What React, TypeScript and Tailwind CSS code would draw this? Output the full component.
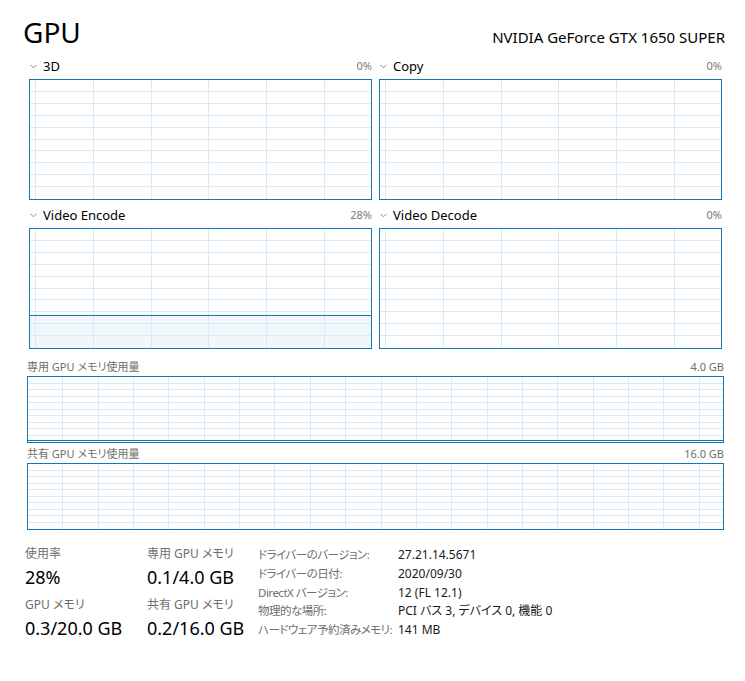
import React from "react";

const BORDER = "#1576b6";
const GRID = "#d9eaf4";

type GridProps = {
  w: number;
  h: number;
  xs: number[];
  rows: number;
  fill?: number; // fraction of height filled from bottom
};

// chart grid drawn as svg inside a bordered box
const ChartGrid = ({ w, h, xs, rows, fill }: GridProps) => {
  const inner = h - 2;
  const ys = Array.from({ length: rows - 1 }, (_, i) => Math.round(((i + 1) * inner) / rows) + 0.5);
  const fillY = fill !== undefined ? Math.round(inner * (1 - fill)) : null;
  return (
    <svg width={w} height={h} className="block" shapeRendering="crispEdges">
      <rect x={0.5} y={0.5} width={w - 1} height={h - 1} fill="#ffffff" stroke="none" />
      {fillY !== null && (
        <rect x={1} y={fillY + 1} width={w - 2} height={h - 2 - fillY} fill="#f1f6fa" />
      )}
      {xs.map((x) => (
        <line key={"x" + x} x1={Math.round(x) + 0.5} y1={1} x2={Math.round(x) + 0.5} y2={h - 1} stroke={GRID} strokeWidth={1} />
      ))}
      {ys.map((y) => (
        <line key={"y" + y} x1={1} y1={y} x2={w - 1} y2={y} stroke={GRID} strokeWidth={1} />
      ))}
      {fillY !== null && (
        <line x1={1} y1={fillY + 1.5} x2={w - 1} y2={fillY + 1.5} stroke={BORDER} strokeWidth={1} />
      )}
      <rect x={0.5} y={0.5} width={w - 1} height={h - 1} fill="none" stroke={BORDER} strokeWidth={1} />
    </svg>
  );
};

const Chevron = () => (
  <svg width="7" height="5" viewBox="0 0 7 5" className="mt-[5px] mr-[6px]">
    <polyline points="0.5,0.8 3.5,3.8 6.5,0.8" fill="none" stroke="#8a8a8a" strokeWidth="1" />
  </svg>
);

const topXs = [6, 63.8, 121.6, 179.4, 237.2, 295];

const EngineChart = ({ title, pct, fill }: { title: string; pct: string; fill?: number }) => (
  <div className="flex flex-col">
    <div className="flex h-[20px] items-start justify-between">
      <div className="flex items-start pl-[1px]">
        <Chevron />
        <span className="text-[13px] leading-[14px] text-black">{title}</span>
      </div>
      <span className="text-[11px] leading-[14px] text-[#7a7a7a]">{pct}</span>
    </div>
    <ChartGrid w={343} h={121} xs={topXs} rows={10} fill={fill} />
  </div>
);

const memXs = Array.from({ length: 19 }, (_, i) => (i + 1) * 35.35);

const MemoryChart = ({ title, max, used }: { title: string; max: string; used?: boolean }) => (
  <div className="flex w-[697px] flex-col">
    <div className="flex h-[16px] items-start justify-between">
      <span className="text-[11px] leading-[14px] text-[#6e6e6e]">{title}</span>
      <span className="text-[11px] leading-[14px] text-[#6e6e6e]">{max}</span>
    </div>
    <div className="relative">
      <ChartGrid w={697} h={67} xs={memXs} rows={10} />
      {used && <div className="absolute left-[1px] right-[1px] bottom-[2px] h-px bg-[#1576b6]" />}
    </div>
  </div>
);

const Stat = ({ label, value }: { label: string; value: string }) => (
  <div className="flex flex-col">
    <span className="h-[16px] whitespace-nowrap text-[12px] leading-[16px] text-[#6e6e6e]">{label}</span>
    <span className="mt-[3px] h-[24px] whitespace-nowrap text-[18px] leading-[24px] text-black">{value}</span>
  </div>
);

const info: [string, string][] = [
  ["ドライバーのバージョン:", "27.21.14.5671"],
  ["ドライバーの日付:", "2020/09/30"],
  ["DirectX バージョン:", "12 (FL 12.1)"],
  ["物理的な場所:", "PCI バス 3, デバイス 0, 機能 0"],
  ["ハードウェア予約済みメモリ:", "141 MB"],
];

export default function App() {
  return (
    <div className="w-[745px] h-[681px] bg-white overflow-hidden font-['Noto_Sans','Noto_Sans_CJK_JP',sans-serif] [font-feature-settings:'palt']">
      <div className="flex h-[59px] items-baseline justify-between pl-[23px] pr-[20px] pt-[14px]">
        <span className="text-[28px] leading-[36px] text-black">GPU</span>
        <span className="text-[15px] leading-[20px] text-black">NVIDIA GeForce GTX 1650 SUPER</span>
      </div>

      <div className="grid grid-cols-[343px_343px] gap-x-[7px] gap-y-[8px] pl-[29px]">
        <EngineChart title="3D" pct="0%" />
        <EngineChart title="Copy" pct="0%" />
        <EngineChart title="Video Encode" pct="28%" fill={0.28} />
        <EngineChart title="Video Decode" pct="0%" />
      </div>

      <div className="mt-[11px] flex flex-col gap-[4px] pl-[27px]">
        <MemoryChart title="専用 GPU メモリ使用量" max="4.0 GB" used />
        <MemoryChart title="共有 GPU メモリ使用量" max="16.0 GB" />
      </div>

      <div className="mt-[16px] flex pl-[25px]">
        <div className="flex w-[122px] flex-col gap-[8px]">
          <Stat label="使用率" value="28%" />
          <Stat label="GPU メモリ" value="0.3/20.0 GB" />
        </div>
        <div className="flex w-[111px] flex-col gap-[8px]">
          <Stat label="専用 GPU メモリ" value="0.1/4.0 GB" />
          <Stat label="共有 GPU メモリ" value="0.2/16.0 GB" />
        </div>
        <div className="grid grid-cols-[140px_1fr]">
          {info.map(([k, v]) => (
            <React.Fragment key={k}>
              <span className="h-[18px] whitespace-nowrap text-[11.5px] leading-[18px] tracking-[-0.5px] text-[#6e6e6e]">{k}</span>
              <span className="h-[18px] whitespace-nowrap text-[12px] leading-[18px] text-[#1a1a1a]">{v}</span>
            </React.Fragment>
          ))}
        </div>
      </div>
    </div>
  );
}
